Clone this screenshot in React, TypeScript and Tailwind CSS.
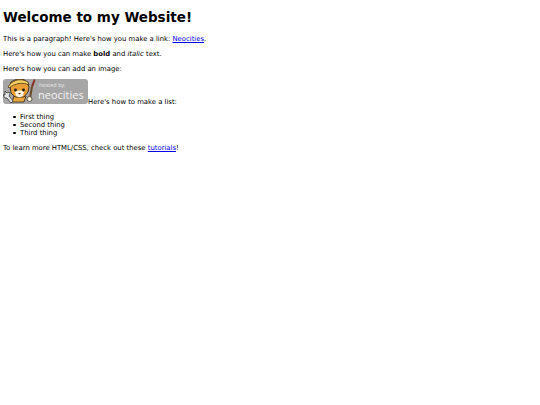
function HostedBadge() {
  return (
    <span className="relative inline-block w-[85px] h-[25px] rounded-[3px] bg-[#a6a6a6] align-baseline overflow-hidden">
      <span className="absolute left-[36px] top-[3px] text-[5.5px] leading-[7px] text-[#e8e8e8] whitespace-nowrap font-['Open_Sans',sans-serif]">hosted by,</span>
      <span className="absolute left-[35px] top-[8px] text-[11px] leading-[16px] text-[#f4f4f4] whitespace-nowrap font-['Open_Sans',sans-serif]">neocities</span>
    </span>
  );
}

function Cat() {
  return (
    <svg viewBox="0 0 34 25" className="absolute left-0 top-0 w-[34px] h-[25px]">
      <path d="M11 17l-2 6h12l2-6z" fill="#e9a63c" stroke="#33281a" strokeWidth="0.8" />
      <path d="M2 12l2 2 2-1 1 2-1 2 4 5-2 2-4-5-2 0-2-3 2 0z" fill="#e6e6e6" stroke="#222" strokeWidth="0.7" />
      <path d="M7 7l1-4 6-3h6l4 3 2 5-1 5-4 5H12l-4-4z" fill="#e99f35" stroke="#33281a" strokeWidth="0.9" />
      <path d="M5 8c3-6 12-10 20-5l1 3c-6-3-14-2-20 3z" fill="#f5cf61" stroke="#33281a" strokeWidth="0.7" />
      <path d="M12 13c2-2 7-2 9 0l-1 4c-2 1.500-5 1.500-7 0z" fill="#fff4de" />
      <circle cx="12.500" cy="11" r="1.400" fill="#1c1c1c" />
      <circle cx="20.500" cy="11" r="1.400" fill="#1c1c1c" />
      <path d="M15 14h3l-1.500 1.500z" fill="#5c2c16" />
      <path d="M31 0l1.500 1-2.500 7-2-1z" fill="#8a2f22" />
      <path d="M28 7l2 1-2 11-2-.5z" fill="#6b4a2a" />
      <circle cx="26.500" cy="20" r="2.500" fill="#fff4de" stroke="#33281a" strokeWidth="0.7" />
    </svg>
  );
}

function Item({ children }: { children: string }) {
  return (
    <li className="flex items-center gap-[4.500px] leading-[8px]">
      <span className="size-[2.500px] rounded-full bg-black" />
      {children}
    </li>
  );
}

export default function App() {
  return (
    <div className="min-h-[405px] bg-white p-[3px] text-[6.85px] leading-[9px] text-black font-['DejaVu_Sans',sans-serif]">
      <h1 className="mt-[5px] mb-[9px] text-[13.5px] leading-[18px] font-bold">Welcome to my Website!</h1>
      <p className="mb-[6px]">
        This is a paragraph! Here's how you make a link: <a href="#" className="text-[#0000ee] underline">Neocities</a>.
      </p>
      <p className="mb-[6px]">
        Here's how you can make <strong>bold</strong> and <em>italic</em> text.
      </p>
      <p className="mb-[5px]">Here's how you can add an image:</p>
      <div className="relative">
        <HostedBadge />
        <Cat />
        Here's how to make a list:
      </div>
      <ul className="mt-[6px] mb-[7px] pl-[10px]">
        <Item>First thing</Item>
        <Item>Second thing</Item>
        <Item>Third thing</Item>
      </ul>
      <p>
        To learn more HTML/CSS, check out these <a href="#" className="text-[#0000ee] underline">tutorials</a>!
      </p>
    </div>
  );
}
